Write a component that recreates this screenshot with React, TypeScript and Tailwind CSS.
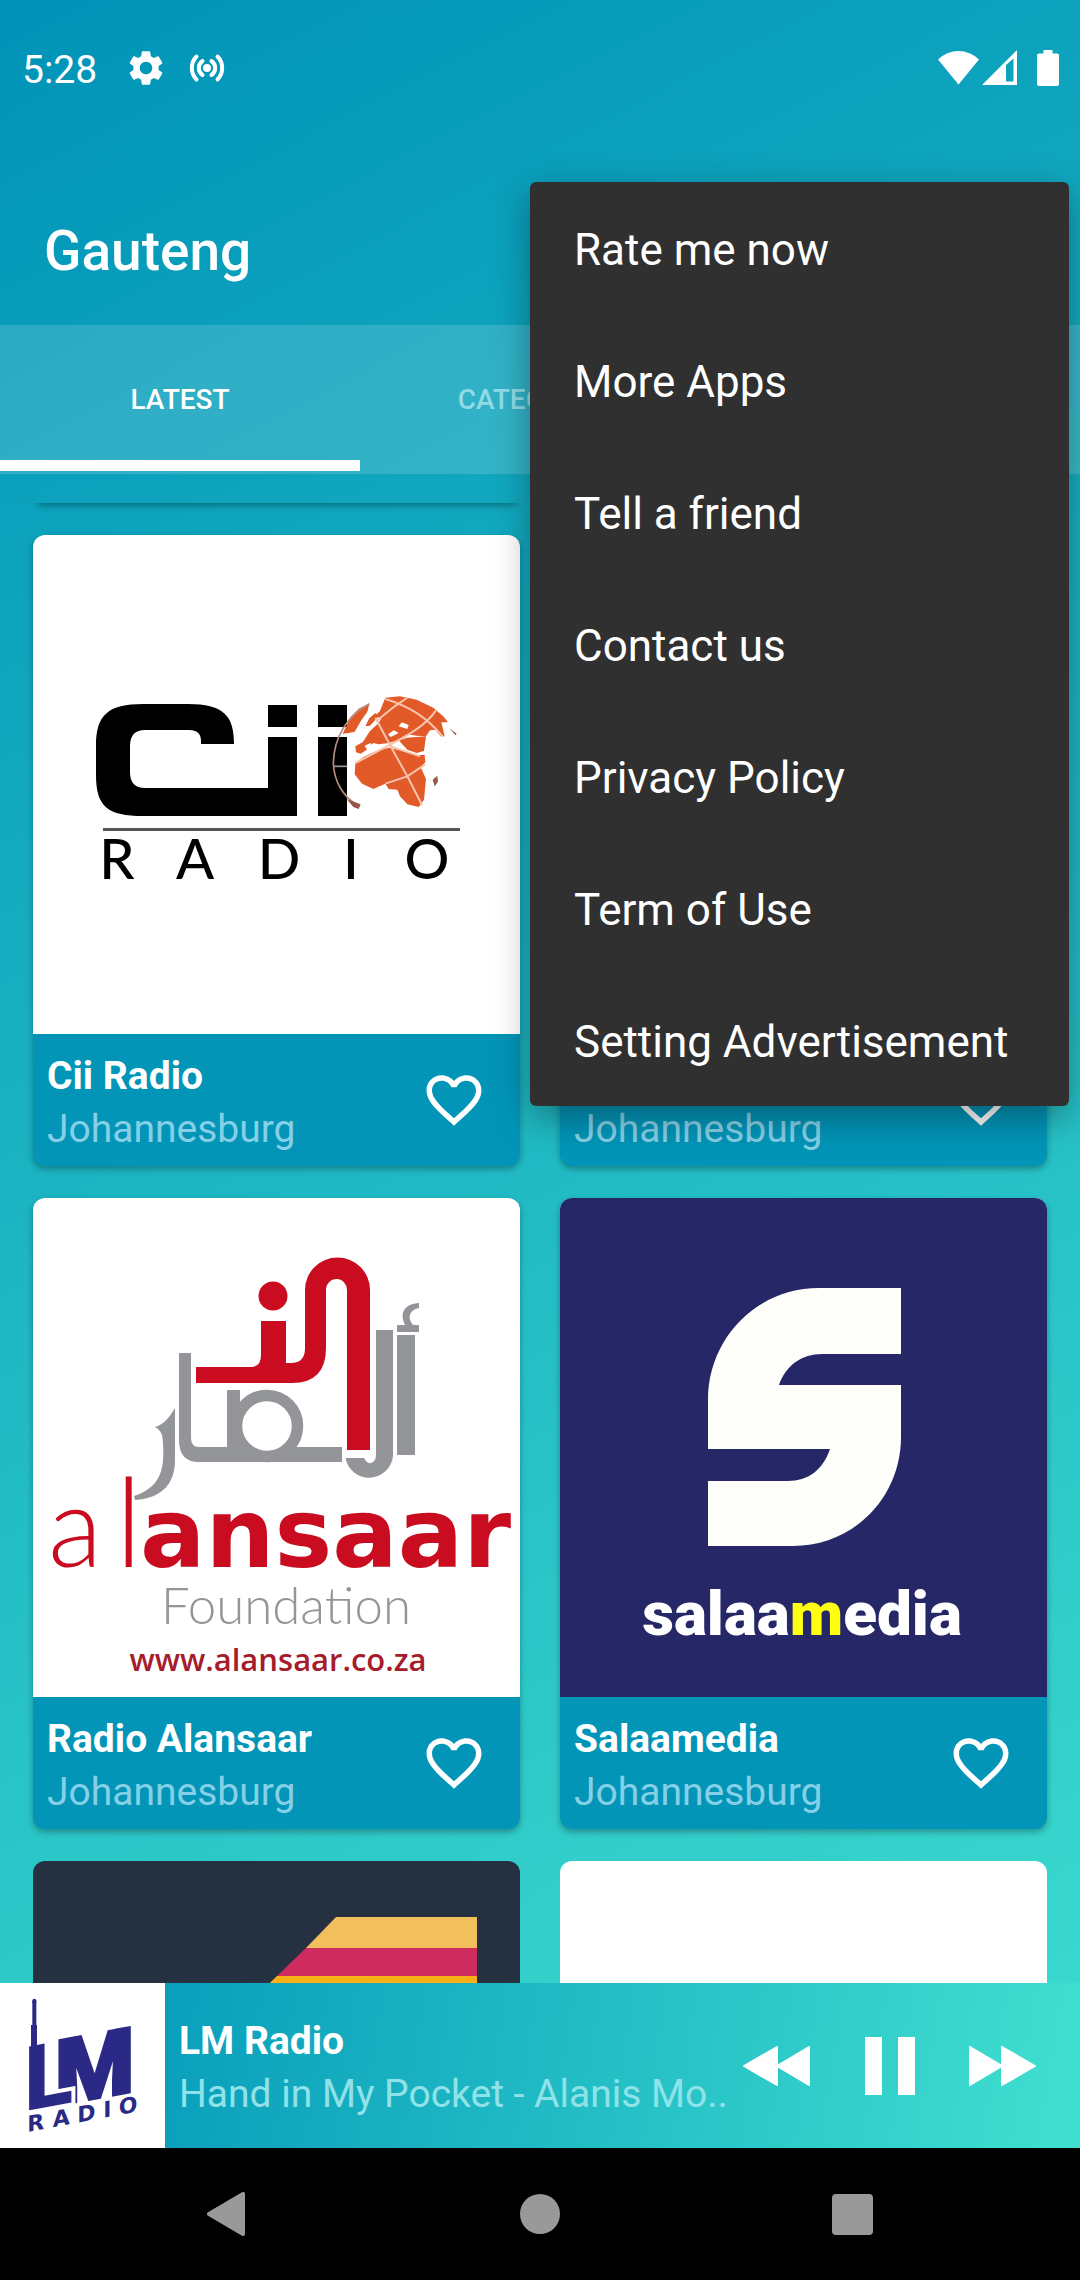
import { useState, type ReactNode } from "react";
import { MdFavorite, MdFavoriteBorder, MdSettings } from "react-icons/md";
import clsx from "clsx";

interface Station {
  id: string;
  name: string;
  city: string;
  art: ReactNode;
}

const MENU_ITEMS = [
  "Rate me now",
  "More Apps",
  "Tell a friend",
  "Contact us",
  "Privacy Policy",
  "Term of Use",
  "Setting Advertisement",
];

const TABS = ["LATEST", "CATEGORIES", "FAVORITES"];

/* ---------- station artwork, all on a 487 x 499 canvas ---------- */

function CiiArt() {
  const letters = [
    { ch: "R", x: 84 },
    { ch: "A", x: 162 },
    { ch: "D", x: 246 },
    { ch: "I", x: 318 },
    { ch: "O", x: 394 },
  ];
  return (
    <svg viewBox="0 0 487 499" className="size-full" role="img" aria-label="Cii Radio">
      <path d="M201 209H168V206Q168 195 156 195H112Q97 195 97 211V237Q97 253 112 253H235V202H264V281H110C75 281 63 272 63 240V211C63 180 75 169 110 169H155C190 169 201 180 201 209Z" />
      <rect x="235" y="170" width="29" height="22" />
      <rect x="285" y="170" width="29" height="22" />
      <rect x="285" y="202" width="29" height="79" />
      {/* globe */}
      <g transform="translate(287 146) scale(0.3333)">
        <path d="M84 100C96 120 104 160 100 190C86 230 84 260 100 290L96 372L160 330L140 60L84 80Z" fill="#fff" />
        <g fill="#e25a28">
          <path d="M148 68L118 82L92 108L68 158L86 156L104 152L124 118L142 92Z" />
          <path d="M196 50L240 46L290 56L340 80L372 108L384 124L364 124L374 166L362 166L346 146L330 148L318 166L290 164L262 160L238 176L206 186L176 190L160 186L140 206L122 218L108 214L106 196L128 184L150 150L176 126L184 112L164 106L180 90Z" />
          <path d="M166 96L176 106L150 134L136 136L148 112Z" />
          <path d="M236 178L262 170L318 166L312 210L290 216L262 206Z" />
          <path d="M106 248L130 228L164 212L206 200L240 208L290 222L314 222L316 244L302 258L318 294L312 356L296 378L262 370L240 346L232 326L206 324L196 308L160 324L126 308L104 280Z" />
        </g>
        <path d="M134 194L152 186L164 206L144 210ZM204 160L222 148L236 156L212 168ZM236 136L246 124L266 132L262 144Z" fill="#fff" />
        <g fill="none" stroke="#f7c3ad" strokeWidth="6">
          <path d="M166 110L212 196L262 286L306 372" />
          <path d="M262 50L224 76L172 118" />
          <path d="M196 54C270 76 320 110 368 166" />
          <path d="M348 88C320 130 270 160 212 190L106 246" />
          <path d="M196 308L262 286L316 250" />
          <path d="M212 196L300 226" />
        </g>
        <path d="M148 68C80 104 42 170 40 246C42 300 68 346 112 372" fill="none" stroke="#b98b80" strokeWidth="5" />
        <path d="M40 256H82" stroke="#999" strokeWidth="5" />
        <path d="M80 354L122 370L116 384L100 378ZM338 296L352 284L354 302L344 316ZM388 142L410 158L406 162Z" fill="#96574a" />
      </g>
      <rect x="70" y="293" width="357" height="3" fill="#555" />
      <g fontFamily="Lato, sans-serif" fontWeight="500" fontSize="56" textAnchor="middle">
        {letters.map((l) => (
          <text key={l.ch} x={l.x} y="344">
            {l.ch}
          </text>
        ))}
      </g>
    </svg>
  );
}

function AlansaarArt() {
  return (
    <svg viewBox="0 0 487 499" className="size-full" role="img" aria-label="Alansaar Foundation">
      <g fill="#c90c20">
        <path d="M163 169H218Q228 169 228 157V123H253V165H258Q272 165 272 150V92A32.5 32.5 0 0 1 337 92V252H314V92A10.5 11 0 0 0 293 92V150Q293 185 259 185H163Z" />
        <circle cx="240" cy="98" r="14.5" />
      </g>
      <g fill="#939598">
        <rect x="364" y="137" width="18" height="120" />
        <path d="M364 127H372C366 114 372 106 386 105V110C376 112 374 120 380 127H386V134H364Z" />
        <path d="M343 132H360V258A24 24 0 0 1 312.5 260H331Q334 266 338 265Q343 264 343 256Z" />
        <path d="M146 155H158V240Q158 249 166 249H309V264H166Q146 264 146 242Z" />
        <rect x="194" y="192" width="13" height="60" />
        <path d="M142 210C136 220 130 227 122 229C129 233 130 238 130 247C132 275 125 290 101 298L102 302C130 300 142 285 142 262Z" />
      </g>
      <circle cx="234" cy="228" r="30.5" fill="#fff" stroke="#939598" strokeWidth="11.5" />
      <g fill="#c90c20">
        <g fontFamily="Lato, sans-serif" fontWeight="300">
          <text x="15" y="369" fontSize="112">
            a
          </text>
          <text x="82" y="369" fontSize="124">
            l
          </text>
        </g>
        <text x="107" y="369" fontFamily="'DejaVu Sans', sans-serif" fontWeight="700" fontSize="97">
          ansaar
        </text>
      </g>
      <text x="253" y="426" textAnchor="middle" fill="#939598" fontFamily="Lato, sans-serif" fontWeight="300" fontSize="51">
        Foundation
      </text>
      <text x="245" y="473" textAnchor="middle" fill="#a51c2c" fontFamily="'Open Sans', sans-serif" fontWeight="600" fontSize="31">
        www.alansaar.co.za
      </text>
    </svg>
  );
}

function SalaamediaArt() {
  return (
    <svg viewBox="0 0 487 499" className="size-full bg-[#262767]" role="img" aria-label="Salaamedia">
      <path
        d="M259 90H341V156H262C242 156 226 167 219 187H341V239C341 300 293 348 233 348H148V283H228C248 283 263 272 270 251H148V202C148 140 197 90 259 90Z"
        fill="#fefefa"
      />
      <text x="242" y="437" textAnchor="middle" fill="#fff" fontFamily="Roboto, sans-serif" fontWeight="900" fontSize="62">
        salaa<tspan fill="#ffff14">m</tspan>edia
      </text>
    </svg>
  );
}

function StripesArt() {
  return (
    <svg viewBox="0 0 487 499" className="size-full bg-[#253040]" aria-hidden="true">
      <path d="M303 56H444V87H273Z" fill="#f3bf5c" />
      <path d="M273 87H444V115H244Z" fill="#ce2c5e" />
      <path d="M244 115H444V146H212Z" fill="#fbb017" />
    </svg>
  );
}

function LmRadioArt() {
  const letters = [
    { ch: "R", x: -4 },
    { ch: "A", x: 72 },
    { ch: "D", x: 146 },
    { ch: "I", x: 224 },
    { ch: "O", x: 270 },
  ];
  return (
    <svg viewBox="0 0 495 495" className="size-full bg-white" role="img" aria-label="LM Radio">
      <g fill="#2a2986" fontFamily="Roboto, sans-serif" fontWeight="900">
        <g transform="translate(82 383) skewY(-10.5)">
          <text x="84" y="0" fontSize="270" stroke="#2a2986" strokeWidth="10">
            M
          </text>
          <text x="-9" y="0" fontSize="270" stroke="#fff" strokeWidth="24" paintOrder="stroke">
            L
          </text>
        </g>
        <path d="M97 62Q94 48 103 47Q112 48 109 62V126H111V196H93V126H97Z" />
        <g transform="translate(86 446) skewY(-10.5)" fontFamily="'DejaVu Sans', sans-serif" fontWeight="700" fontSize="66">
          {letters.map((l) => (
            <text key={l.ch} x={l.x} y="0">
              {l.ch}
            </text>
          ))}
        </g>
      </g>
    </svg>
  );
}

const STATIONS: Station[] = [
  { id: "cii", name: "Cii Radio", city: "Johannesburg", art: <CiiArt /> },
  { id: "lm", name: "LM Radio", city: "Johannesburg", art: null },
  { id: "alansaar", name: "Radio Alansaar", city: "Johannesburg", art: <AlansaarArt /> },
  { id: "salaamedia", name: "Salaamedia", city: "Johannesburg", art: <SalaamediaArt /> },
];

/* ---------- pieces ---------- */

function StatusBar() {
  return (
    <div className="flex h-[135px] shrink-0 items-center justify-between pl-[22px] pr-[21px]">
      <div className="flex items-center">
        <span className="pt-1 text-[39px] leading-[44px]">5:28</span>
        <MdSettings className="ml-7 size-[42px]" />
        <svg viewBox="0 0 40 40" className="ml-5 size-10" fill="none" stroke="currentColor" strokeWidth="4" strokeLinecap="round">
          <circle cx="20" cy="20" r="4" fill="currentColor" stroke="none" />
          <path d="M15.5 13A8.5 8.5 0 0 0 15.5 27M24.5 13A8.5 8.5 0 0 1 24.5 27" />
          <path d="M9.5 8.5A16.5 16.5 0 0 0 9.5 31.5M30.5 8.5A16.5 16.5 0 0 1 30.5 31.5" />
        </svg>
      </div>
      <div className="flex items-center">
        <svg viewBox="0 0 41 35" className="h-[35px] w-[41px]" fill="currentColor">
          <path d="M0 9.5Q9 1 20.5 1T41 9.5L20.5 34.5Z" />
        </svg>
        <svg viewBox="0 0 35 35" className="ml-[3px] size-[35px]" fill="currentColor" fillRule="evenodd">
          <path d="M35 0V35H0ZM24 15V31.5H31.5V8.5Z" />
        </svg>
        <svg viewBox="0 0 22 36" className="ml-5 h-9 w-[22px]" fill="currentColor">
          <path d="M6.5 0H15.5V3.5H20Q22 3.5 22 5.5V34Q22 36 20 36H2Q0 36 0 34V5.5Q0 3.5 2 3.5H6.5Z" />
        </svg>
      </div>
    </div>
  );
}

function StationCard({ station }: { station: Station }) {
  const [liked, setLiked] = useState(false);
  const Heart = liked ? MdFavorite : MdFavoriteBorder;

  return (
    <article className="overflow-hidden rounded-xl bg-[#0295b8] shadow-[0_3px_6px_rgba(0,0,0,0.3)]">
      <div className="aspect-[487/499] bg-white">{station.art}</div>
      <div className="flex h-[132px] items-center justify-between pl-3.5 pr-[33px]">
        <div className="min-w-0 pt-1.5">
          <h2 className="truncate text-[39px] font-bold leading-[53px]">{station.name}</h2>
          <p className="truncate text-[39px] leading-[53px] text-[#85d0e6]">{station.city}</p>
        </div>
        <button type="button" aria-label={`Favourite ${station.name}`} aria-pressed={liked} onClick={() => setLiked(!liked)}>
          <Heart className="size-[66px]" />
        </button>
      </div>
    </article>
  );
}

function OverflowMenu() {
  return (
    <div
      role="menu"
      className="absolute right-[11px] top-[182px] z-10 flex w-[539px] flex-col rounded-md bg-[#303030] shadow-[0_12px_36px_rgba(0,0,0,0.35)]"
    >
      {MENU_ITEMS.map((item) => (
        <button key={item} type="button" role="menuitem" className="h-[132px] px-11 pt-1 text-left text-[44px] leading-[52px]">
          {item}
        </button>
      ))}
    </div>
  );
}

function Player() {
  const [playing, setPlaying] = useState(true);

  return (
    <footer className="flex h-[165px] shrink-0 bg-linear-[99deg] from-[#0093b8] to-[#40e0d0]">
      <div className="size-[165px] shrink-0">
        <LmRadioArt />
      </div>
      <div className="flex min-w-0 flex-1 flex-col justify-center pl-3.5 pt-1">
        <p className="truncate text-[39px] font-bold leading-[53px]">LM Radio</p>
        <p className="overflow-hidden whitespace-nowrap text-[39px] leading-[53px] text-[#8fe3e8]">
          Hand in My Pocket - Alanis Mo..
        </p>
      </div>
      <div className="mr-11 flex shrink-0 gap-[46px]">
        <button type="button" aria-label="Previous" className="grid w-[67px] place-items-center">
          <svg viewBox="0 0 67 40" className="h-10 w-[67px]" fill="currentColor" stroke="currentColor" strokeWidth="2" strokeLinejoin="round">
            <path d="M1 20L34 1V39ZM34 20L66 1V39Z" />
          </svg>
        </button>
        <button
          type="button"
          aria-label={playing ? "Pause" : "Play"}
          onClick={() => setPlaying(!playing)}
          className="grid w-[67px] place-items-center"
        >
          <svg viewBox="0 0 50 58" className="h-[58px] w-[50px]" fill="currentColor">
            {playing ? <path d="M0 0H17V58H0ZM33 0H50V58H33Z" /> : <path d="M4 0L50 29L4 58Z" />}
          </svg>
        </button>
        <button type="button" aria-label="Next" className="grid w-[67px] place-items-center">
          <svg viewBox="0 0 67 40" className="h-10 w-[67px]" fill="currentColor" stroke="currentColor" strokeWidth="2" strokeLinejoin="round">
            <path d="M66 20L33 1V39ZM33 20L1 1V39Z" />
          </svg>
        </button>
      </div>
    </footer>
  );
}

function NavBar() {
  return (
    <nav className="flex h-[132px] shrink-0 justify-center bg-black text-[#999]">
      <button type="button" aria-label="Back" className="grid w-[312px] place-items-center">
        <svg viewBox="0 0 42 44" className="h-11 w-[42px]" fill="currentColor" stroke="currentColor" strokeWidth="4" strokeLinejoin="round">
          <path d="M2 22L36 2V42Z" />
        </svg>
      </button>
      <button type="button" aria-label="Home" className="grid w-[312px] place-items-center">
        <span className="size-10 rounded-full bg-[#999]" />
      </button>
      <button type="button" aria-label="Recents" className="grid w-[312px] place-items-center">
        <span className="size-[41px] rounded-sm bg-[#999]" />
      </button>
    </nav>
  );
}

export default function App() {
  const [tab, setTab] = useState(0);

  return (
    <div className="relative flex h-screen flex-col overflow-hidden bg-linear-[153deg] from-[#0093b8] to-[#40e0d0] font-[Roboto,sans-serif] text-white">
      <StatusBar />
      <header className="flex h-[190px] shrink-0 items-end px-11 pb-[42px]">
        <h1 className="text-[55px] font-medium leading-[64px]">Gauteng</h1>
      </header>

      <div role="tablist" className="flex h-[149px] shrink-0 bg-white/15 pb-[3px]">
        {TABS.map((label, i) => (
          <button
            key={label}
            type="button"
            role="tab"
            aria-selected={tab === i}
            onClick={() => setTab(i)}
            className={clsx(
              "flex-1 border-b-[11px] pt-3.5 text-[28px] font-medium leading-8",
              tab === i ? "border-white" : "border-transparent text-[#8fdce6]",
            )}
          >
            {label}
          </button>
        ))}
      </div>

      {/* the list is scrolled: only the shadow of the row above peeks in */}
      <main className="mt-[29px] min-h-0 flex-1 overflow-hidden px-[33px]">
        <div className="-mt-4 grid grid-cols-2 gap-x-10 gap-y-8">
          <div className="h-4 rounded-b-xl shadow-[0_3px_6px_rgba(0,0,0,0.3)]" />
          <div className="h-4 rounded-b-xl shadow-[0_3px_6px_rgba(0,0,0,0.3)]" />
          {STATIONS.map((s) => (
            <StationCard key={s.id} station={s} />
          ))}
          <div className="aspect-[487/499] overflow-hidden rounded-t-xl">
            <StripesArt />
          </div>
          <div className="aspect-[487/499] rounded-t-xl bg-white" />
        </div>
      </main>

      <Player />
      <NavBar />
      <OverflowMenu />
    </div>
  );
}
